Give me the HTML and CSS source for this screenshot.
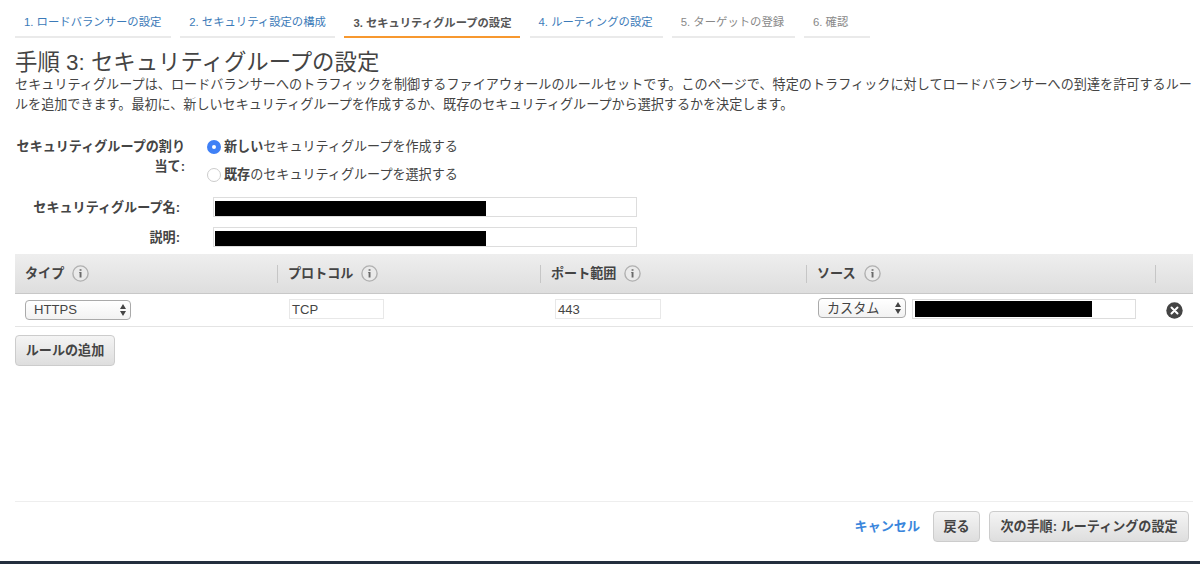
FILE: index.html
```html
<!DOCTYPE html>
<html lang="ja">
<head>
    <meta charset="UTF-8">
    <meta name="viewport" content="width=device-width, initial-scale=1.0">
    <title>手順 3: セキュリティグループの設定</title>
    <link rel="stylesheet" href="styles.css">
</head>
<body>
    <svg class="sprite" width="0" height="0">
        <symbol id="icon-info" viewBox="0 0 17 17">
            <circle cx="8.5" cy="8.5" r="7.6" fill="#eaeaea" stroke="#b0b0b0" stroke-width="1.4"/>
            <path d="M7.6 4.2h1.9v1.6H7.6zM7.2 7h2.3v5.6H7.6V8h-.4z" fill="#6a6a6a"/>
        </symbol>
        <symbol id="icon-arrows" viewBox="0 0 6 12">
            <path d="M3 0l3 5H0zM3 12L0 7h6z" fill="#444"/>
        </symbol>
    </svg>

    <nav class="wizard-steps">
        <a class="step">1. ロードバランサーの設定</a>
        <a class="step">2. セキュリティ設定の構成</a>
        <span class="step active">3. セキュリティグループの設定</span>
        <a class="step">4. ルーティングの設定</a>
        <span class="step disabled">5. ターゲットの登録</span>
        <span class="step disabled">6. 確認</span>
    </nav>

    <main class="content">
        <h1>手順 3: セキュリティグループの設定</h1>
        <p class="description"><span class="first-line">セキュリティグループは、ロードバランサーへのトラフィックを制御するファイアウォールのルールセットです。このページで、特定のトラフィックに対してロードバランサーへの到達を許可するルー</span><br>ルを追加できます。最初に、新しいセキュリティグループを作成するか、既存のセキュリティグループから選択するかを決定します。</p>

        <form class="group-form">
            <div class="assign-row">
                <div class="assign-label">セキュリティグループの割り<br>当て:</div>
                <div class="radio-list">
                    <label class="radio"><span class="dot checked"></span><span><b>新しい</b>セキュリティグループを作成する</span></label>
                    <label class="radio"><span class="dot"></span><span><b>既存</b>のセキュリティグループを選択する</span></label>
                </div>
            </div>
            <div class="field-row">
                <div class="field-label">セキュリティグループ名:</div>
                <div class="text-box"><span class="mask"></span></div>
            </div>
            <div class="field-row">
                <div class="field-label">説明:</div>
                <div class="text-box"><span class="mask"></span></div>
            </div>
        </form>

        <section class="rules">
            <div class="rules-head">
                <div class="head-cell">タイプ<svg class="info"><use href="#icon-info"/></svg></div>
                <div class="head-cell">プロトコル<svg class="info"><use href="#icon-info"/></svg></div>
                <div class="head-cell">ポート範囲<svg class="info"><use href="#icon-info"/></svg></div>
                <div class="head-cell">ソース<svg class="info"><use href="#icon-info"/></svg></div>
                <div class="head-cell"></div>
            </div>
            <div class="rules-row">
                <div class="cell">
                    <div class="select type-select">HTTPS<svg class="arrows"><use href="#icon-arrows"/></svg></div>
                </div>
                <div class="cell"><div class="readonly protocol">TCP</div></div>
                <div class="cell"><div class="readonly port">443</div></div>
                <div class="cell source">
                    <div class="select source-select"><span>カスタム</span><svg class="arrows"><use href="#icon-arrows"/></svg></div>
                    <div class="source-box"><span class="mask"></span></div>
                </div>
                <div class="cell">
                    <svg class="remove" viewBox="0 0 17 17">
                        <circle cx="8.5" cy="8.5" r="8.2" fill="#444"/>
                        <path d="M5.5 5.5l6 6M11.5 5.5l-6 6" stroke="#fff" stroke-width="2" stroke-linecap="round"/>
                    </svg>
                </div>
            </div>
        </section>
        <button class="btn add-rule" type="button">ルールの追加</button>
    </main>

    <footer class="actions">
        <a class="cancel">キャンセル</a>
        <button class="btn back" type="button">戻る</button>
        <button class="btn next" type="button">次の手順: ルーティングの設定</button>
    </footer>
    <div class="bottom-bar"></div>
</body>
</html>
```
FILE: styles.css
```css
* {
    margin: 0;
    padding: 0;
    box-sizing: border-box;
}

body {
    height: 564px;
    display: flex;
    flex-direction: column;
    overflow: hidden;
    background: #fff;
    color: #444;
    font-family: "Liberation Sans", "Noto Sans CJK JP", sans-serif;
    font-size: 13.08px;
    line-height: 20px;
    white-space: nowrap;
}

.sprite {
    position: absolute;
}

/* ウィザードのステップ */
.wizard-steps {
    display: grid;
    grid-template-columns: 156px 155px 176px 133px 123px 66px;
    column-gap: 9.2px;
    padding: 0 15px;
    height: 38px;
}

.step {
    padding: 12px 0 0 9px;
    border-bottom: 2px solid #eaeaea;
    color: #3b7ab8;
    font-size: 11.35px;
}

.step.active {
    padding-top: 13px;
    border-color: #f7982f;
    color: #555;
    font-size: 11.3px;
    font-weight: bold;
}

.step.disabled {
    color: #888;
}

.content {
    flex: 1;
    padding: 12px 7px 0 15px;
}

h1 {
    height: 25px;
    font-size: 22.4px;
    font-weight: normal;
    line-height: 25px;
}

.first-line {
    letter-spacing: 0.05px;
}

/* フォーム */
.group-form {
    padding-top: 22px;
}

.assign-row {
    display: flex;
    height: 60px;
}

.assign-label {
    width: 170px;
    text-align: right;
    font-weight: bold;
}

.radio-list {
    margin-left: 22px;
}

.radio {
    display: flex;
    align-items: center;
    height: 20px;
    margin-bottom: 8px;
}

.dot {
    width: 14px;
    height: 14px;
    margin: 0 3px 0 0;
    border: 1px solid #ccc;
    border-radius: 50%;
}

.dot.checked {
    border: 5px solid #3f80f6;
}

.field-row {
    display: flex;
    height: 20px;
    margin-bottom: 10px;
}

.field-label {
    width: 165px;
    padding-top: 1px;
    text-align: right;
    font-weight: bold;
}

.text-box {
    width: 424px;
    height: 20px;
    margin-left: 33px;
    padding: 3px 0 0 1px;
    border: 1px solid #ddd;
}

.mask {
    display: block;
    width: 271px;
    height: 15px;
    background: #000;
}

/* ルール一覧 */
.rules {
    margin-top: -3px;
}

.rules-head,
.rules-row {
    display: grid;
    grid-template-columns: 263px 263px 266px 349px 1fr;
    align-items: center;
}

.rules-head {
    height: 40px;
    background: linear-gradient(#eee, #dedede);
    border-bottom: 1px solid #c8c8c8;
}

.head-cell {
    display: flex;
    align-items: center;
    height: 18px;
    padding-left: 10px;
    border-right: 1px solid #c6c6c6;
    font-weight: bold;
}

.head-cell:last-child {
    border-right: 0;
}

.info {
    width: 17px;
    height: 17px;
    margin-left: 8px;
}

.rules-row {
    height: 33px;
    border-bottom: 1px solid #e4e4e4;
}

.cell {
    padding-left: 10px;
}

.select {
    display: flex;
    align-items: center;
    justify-content: space-between;
    height: 20px;
    padding: 0 4px 0 8px;
    background: linear-gradient(#fff, #f2f2f2);
    border: 1px solid #aaa;
    border-radius: 4px;
}

.type-select {
    width: 106px;
}

.source-select {
    width: 88px;
    margin-top: -1px;
}

.source-select span {
    padding-top: 2px;
}

.arrows {
    width: 6px;
    height: 12px;
}

.readonly {
    height: 20px;
    margin-top: -2px;
    padding-left: 2px;
    border: 1px solid #e8e8e8;
    line-height: 19px;
}

.protocol {
    width: 95px;
    margin-left: 1px;
}

.port {
    width: 106px;
    margin-left: 4px;
}

.source {
    display: flex;
    gap: 6px;
    margin-top: -2px;
    padding-left: 11px;
}

.source-box {
    width: 224px;
    height: 20px;
    padding: 1px 0 0 2px;
    border: 1px solid #ddd;
}

.source-box .mask {
    width: 177px;
    height: 16px;
}

.remove {
    display: block;
    width: 17px;
    height: 17px;
    margin-top: 1px;
}

/* ボタン */
.btn {
    height: 31px;
    padding: 0;
    background: linear-gradient(#f4f4f4, #dedede);
    border: 1px solid #ccc;
    border-radius: 4px;
    color: #444;
    font: bold 13.08px/20px "Liberation Sans", "Noto Sans CJK JP", sans-serif;
}

.add-rule {
    width: 100px;
    margin-top: 8px;
}

.actions {
    display: flex;
    align-items: center;
    justify-content: flex-end;
    height: 60px;
    margin: 0 7px 0 15px;
    padding: 0 4px 10px 0;
    border-top: 1px solid #eee;
}

.cancel {
    margin-right: 13px;
    color: #3a86dc;
    font-weight: bold;
}

.back {
    width: 47px;
    margin-right: 9px;
}

.next {
    width: 200px;
}

.bottom-bar {
    height: 3px;
    background: #232f3e;
}
```
